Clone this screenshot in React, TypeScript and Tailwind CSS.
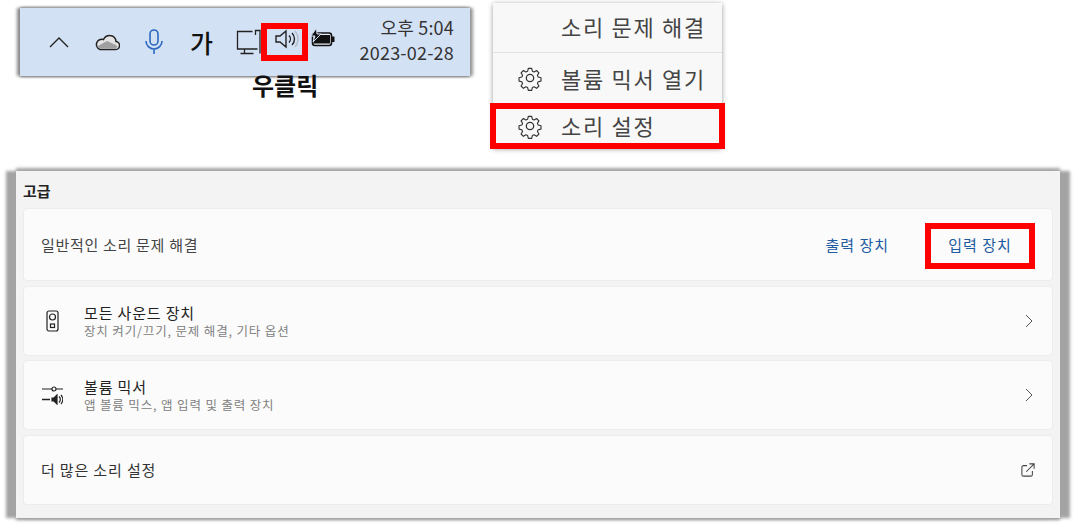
import React from "react";

const font = { fontFamily: '"Noto Sans CJK KR", "Noto Sans", sans-serif' };

function Gear() {
  return (
    <svg width="26" height="26" viewBox="0 0 24 24" fill="none" stroke="#333" strokeWidth="1.2" strokeLinejoin="round">
      <circle cx="12" cy="12" r="3.4" />
      <path d="M10.2 1.8h3.6l.7 3 1.9.8 2.6-1.6 2.5 2.5-1.6 2.6.8 1.9 3 .7v3.6l-3 .7-.8 1.9 1.600 2.6-2.5 2.5-2.6-1.6-1.9.8-.7 3h-3.6l-.7-3-1.9-.8-2.6 1.6-2.5-2.5 1.6-2.6-.8-1.9-3-.7v-3.6l3-.7.8-1.9-1.6-2.6 2.5-2.5 2.6 1.6 1.9-.8z" transform="translate(1.6 1.6) scale(.867)" />
    </svg>
  );
}

function Tray() {
  return (
    <div className="relative ml-[20px] mt-[8px] flex h-[68px] w-[450px] items-center bg-[#d3e1f5] shadow-[-3px_0_3px_#8a8a8a,3px_0_3px_#9a9a9a,0_-1px_2px_#aaa,0_1px_2px_#888]">
      <div className="flex h-full w-[320px] items-center">
        <svg className="ml-[29px]" width="20" height="12" viewBox="0 0 20 12" fill="none" stroke="#222" strokeWidth="1.4"><path d="M1 11 10 2l9 9" /></svg>
        <svg className="ml-[25px]" width="26" height="18" viewBox="0 0 26 18">
          <path d="M6 16.500h15a4 4 0 0 0 1-8 6 6 0 0 0-6-6 7 7 0 0 0-6.500 4 5 5 0 0 0-3.500 10z" fill="#e4e4e4" stroke="#222" strokeWidth="1.500" />
          <path d="M3 13.500 13 8l9 4 1.500 2-2 1.500H6z" fill="#a0a0a0" />
        </svg>
        <svg className="ml-[24px]" width="20" height="26" viewBox="0 0 20 26" fill="none" stroke="#2d68c0" strokeWidth="1.600"><rect x="6" y="1" width="8" height="15" rx="4" /><path d="M2 12a8 8 0 0 0 16 0M10 20v5" /></svg>
        <span className="ml-[26px] text-[25px] font-medium leading-none text-[#111]" style={font}>가</span>
        <svg className="ml-[23px]" width="26" height="26" viewBox="0 0 26 26" fill="none" stroke="#222" strokeWidth="1.300"><path d="M16.500 2.500h-15v17.500h20M8.500 20v4.500M4.500 24.500h13M19.500 6V1.500h4.500v23" /></svg>
      </div>
      <div className="absolute left-[241px] top-[15px] h-[38px] w-[47px] border-[6px] border-[#f00]" />
      <svg className="absolute left-[254px] top-[20px]" width="26" height="22" viewBox="0 0 26 22" fill="none" stroke="#222" strokeWidth="1.400">
        <path d="M2 8h4l6-5v16l-6-5H2zM15 7.500a5 5 0 0 1 0 7M18 5a8.500 8.500 0 0 1 0 12" />
        <path d="M21 3a12 12 0 0 1 0 16" stroke="#b5bcc8" />
      </svg>
      <svg className="absolute left-[290px] top-[20px]" width="25" height="19" viewBox="0 0 25 19">
        <rect x="2.500" y="5" width="19" height="12.500" rx="2.500" fill="#e8eef8" stroke="#111" strokeWidth="1.600" />
        <path d="M7 7h13v8.500H3z" fill="#111" />
        <rect x="22" y="8.500" width="2.500" height="5.500" fill="#111" />
        <path d="M6.500 0 1 8h4l-2 6 8-8H7z" fill="#111" stroke="#d3e1f5" strokeWidth="1" />
      </svg>
      <div className="ml-auto mr-[16px] mt-[-5px] flex flex-col items-end tracking-[0.2px] text-[#333]" style={font}>
        <span className="text-[18px] leading-[25px]">오후 5:04</span>
        <span className="text-[18px] leading-[25px]">2023-02-28</span>
      </div>
    </div>
  );
}

function Menu() {
  return (
    <div className="relative ml-[23px] mt-[3px] h-[145px] w-[229px] bg-[#f8f8f8] text-[22px] tracking-[1.700px] text-[#444] shadow-[0_1px_5px_#999]" style={font}>
      <div className="flex h-[50px] items-center border-b border-[#e2e2e2] pb-[3px] pl-[68px]">소리 문제 해결</div>
      <div className="flex h-[50px] items-center pl-[24px]"><Gear /><span className="ml-[18px]">볼륨 믹서 열기</span></div>
      <div className="flex h-[45px] items-center pl-[24px]"><Gear /><span className="ml-[18px]">소리 설정</span></div>
      <div className="absolute bottom-[-1px] left-[-3px] h-[46px] w-[235px] border-[6px] border-[#f00]" />
    </div>
  );
}

function Card({ className = "", children }: { className?: string; children: React.ReactNode }) {
  return <div className={`flex items-center rounded-[4px] border border-[#ececec] bg-[#fbfbfb] ${className}`}>{children}</div>;
}

function Chevron() {
  return <svg className="ml-auto mr-[18px]" width="10" height="14" viewBox="0 0 10 14" fill="none" stroke="#555" strokeWidth="1"><path d="m2 1 6 6-6 6" /></svg>;
}

function Row({ icon, title, sub, className = "" }: { icon: React.ReactNode; title: string; sub: string; className?: string }) {
  return (
    <Card className={`h-[70px] ${className}`}>
      <div className="mr-[3px] flex w-[57px] justify-center">{icon}</div>
      <div className="flex flex-col pb-[2px]">
        <span className="text-[15px] leading-[20px] tracking-[0.85px] text-[#222]">{title}</span>
        <span className="text-[12.500px] leading-[15px] tracking-[0.85px] text-[#808080]">{sub}</span>
      </div>
      <Chevron />
    </Card>
  );
}

export default function App() {
  return (
    <div className="flex h-[529px] w-[1079px] flex-col overflow-hidden bg-white" style={font}>
      <div className="flex h-[171px] items-start">
        <div className="flex w-[470px] flex-col">
          <Tray />
          <span className="relative ml-[252px] mt-[-3px] text-[24px] font-semibold leading-[24px] text-[#111]">우클릭</span>
        </div>
        <Menu />
      </div>
      <div className="ml-[16px] flex h-[347px] w-[1044px] flex-col bg-[#f3f3f3] px-[7px] shadow-[-10px_0_3px_#a3a3a3,10px_0_3px_#a3a3a3,0_-3px_3px_#aaa,0_2px_3px_#999]">
        <div className="flex h-[37px] items-end pb-[8px] text-[15px] font-semibold leading-[18px] text-[#222]">고급</div>
        <div className="flex flex-col">
          <Card className="h-[73px] pl-[17px] pt-[2px]">
            <span className="text-[15px] tracking-[0.7px] text-[#444]">일반적인 소리 문제 해결</span>
            <span className="ml-auto text-[15px] tracking-[1px] text-[#1d5aa0]">출력 장치</span>
            <div className="ml-[36px] mr-[17px] flex h-[46px] w-[110px] items-center justify-center border-[6px] border-[#f00] text-[15px] tracking-[1px] text-[#1d5aa0]">입력 장치</div>
          </Card>
          <Row
            className="mt-[5px]"
            title="모든 사운드 장치"
            sub="장치 켜기/끄기, 문제 해결, 기타 옵션"
            icon={
              <svg width="13" height="22" viewBox="0 0 13 22" fill="none" stroke="#222" strokeWidth="1.200"><rect x="1" y="1" width="11" height="20" rx="2" /><circle cx="6.500" cy="7" r="3" /><rect x="4.500" y="14" width="4" height="3.500" /></svg>
            }
          />
          <Row
            className="mt-[4px]"
            title="볼륨 믹서"
            sub="앱 볼륨 믹스, 앱 입력 및 출력 장치"
            icon={
              <svg width="21" height="20" viewBox="0 0 21 20" fill="none" stroke="#222" strokeWidth="1.200">
                <path d="M0 4h10M14 4h7" /><circle cx="12" cy="4" r="2" />
                <path d="M0 14.500h8" strokeWidth="1.500" />
                <path d="M10 13h2l3-3v9l-3-3h-2z" fill="#222" /><path d="M17 11.500a4 4 0 0 1 0 6M19 10a7 7 0 0 1 0 9" />
              </svg>
            }
          />
          <Card className="mt-[5px] h-[70px] pl-[17px]">
            <span className="text-[15px] tracking-[0.85px] text-[#333]">더 많은 소리 설정</span>
            <svg className="ml-auto mr-[17px]" width="14" height="14" viewBox="0 0 16 16" fill="none" stroke="#444" strokeWidth="1.200"><path d="M7 3H3a2 2 0 0 0-2 2v8a2 2 0 0 0 2 2h8a2 2 0 0 0 2-2V9M6 10l9-9M9.500 1H15v5.500" /></svg>
          </Card>
        </div>
      </div>
    </div>
  );
}
